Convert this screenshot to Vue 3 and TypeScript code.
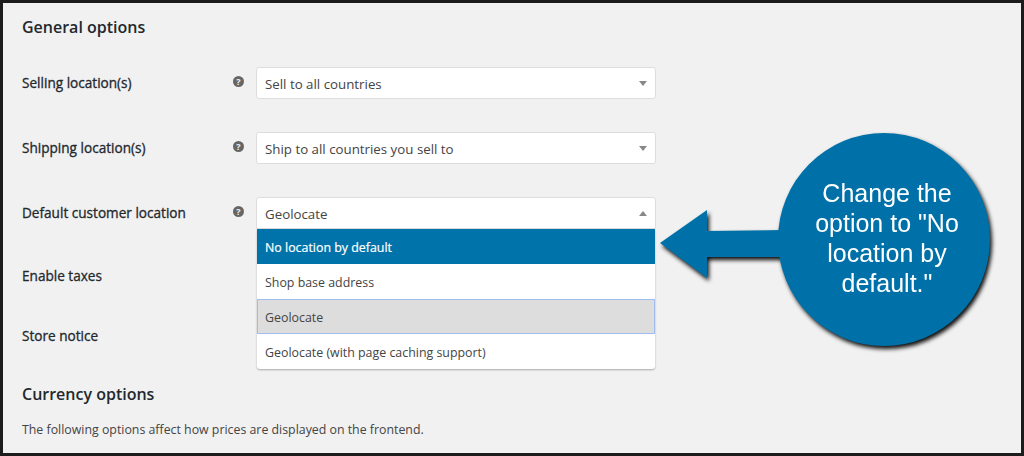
<script setup lang="ts">
interface Row {
  label: string;
  value: string;
}

const selectRows: Row[] = [
  { label: 'Selling location(s)', value: 'Sell to all countries' },
  { label: 'Shipping location(s)', value: 'Ship to all countries you sell to' },
];

const options = [
  { text: 'No location by default', state: 'active' },
  { text: 'Shop base address', state: '' },
  { text: 'Geolocate', state: 'current' },
  { text: 'Geolocate (with page caching support)', state: '' },
];
</script>

<template>
  <div class="page">
    <h2 class="heading first">General options</h2>

    <div v-for="row in selectRows" :key="row.label" class="row">
      <span class="label">{{ row.label }}</span>
      <span class="help">?</span>
      <div class="select">
        <span class="value">{{ row.value }}</span>
        <i class="caret down" />
      </div>
    </div>

    <div class="row">
      <span class="label">Default customer location</span>
      <span class="help">?</span>
      <div class="select open">
        <span class="value">Geolocate</span>
        <i class="caret up" />
        <ul class="dropdown">
          <li v-for="opt in options" :key="opt.text" :class="opt.state">{{ opt.text }}</li>
        </ul>
      </div>
    </div>

    <div class="plain taxes"><span class="label">Enable taxes</span></div>
    <div class="plain notice"><span class="label">Store notice</span></div>

    <h2 class="heading currency">Currency options</h2>
    <p class="desc">The following options affect how prices are displayed on the frontend.</p>

    <div class="callout">
      <svg class="arrow" width="130" height="80" viewBox="0 0 130 80">
        <path d="M2 35 L49 2 L49 23 L125 22 L125 49 L49 49 L49 70 Z" fill="#0071a8" />
      </svg>
      <div class="bubble">Change the<br />option to "No<br />location by<br />default."</div>
    </div>
  </div>
</template>

<style>
html,
body {
  margin: 0;
  background: #f1f1f1;
}
</style>

<style scoped>
.page {
  position: relative;
  box-sizing: border-box;
  width: 1024px;
  height: 456px;
  padding: 0 0 0 19px;
  overflow: hidden;
  background: #f1f1f1;
  border: 3px solid #1c1c1c;
  font-family: "Open Sans", "Noto Sans", sans-serif;
  color: #3c434a;
  font-size: 13.3px;
}
.heading {
  margin: 0;
  font-size: 16px;
  line-height: 20px;
  font-weight: 600;
  color: #23282d;
}
.first {
  padding-top: 14px;
  margin-bottom: 30px;
}
.row {
  display: grid;
  grid-template-columns: 210px 24px 400px;
  align-items: center;
  height: 32px;
  margin-bottom: 33px;
}
.label {
  color: #23282d;
  font-size: 13.6px;
  line-height: 20px;
  -webkit-text-stroke: 0.3px #23282d;
}
.help {
  width: 11px;
  height: 11px;
  margin-top: -3px;
  margin-left: 1px;
  border-radius: 50%;
  background: #666;
  color: #f1f1f1;
  font-size: 9px;
  line-height: 11px;
  font-weight: 700;
  text-align: center;
}
.select {
  position: relative;
  box-sizing: border-box;
  display: flex;
  align-items: center;
  justify-content: space-between;
  height: 32px;
  padding: 0 8px;
  background: #fff;
  border: 1px solid #ddd;
  border-radius: 3px;
  color: #444;
}
.select.open {
  border-bottom-left-radius: 0;
  border-bottom-right-radius: 0;
}
.value {
  padding-top: 1px;
}
.caret {
  width: 0;
  height: 0;
  border-left: 4px solid transparent;
  border-right: 4px solid transparent;
}
.caret.down {
  border-top: 5px solid #888;
}
.caret.up {
  border-bottom: 5px solid #888;
}
.dropdown {
  position: absolute;
  top: 31px;
  left: 0;
  right: 0;
  margin: 0;
  padding: 0;
  list-style: none;
  background: #fff;
  border-radius: 0 0 3px 3px;
  box-shadow: 0 1px 2px rgba(0, 0, 0, 0.3);
  font-size: 12.4px;
}
.dropdown li {
  box-sizing: border-box;
  height: 35px;
  padding: 0 8px;
  line-height: 37px;
  color: #444;
}
.dropdown li.active {
  background: #0073aa;
  color: #fff;
  -webkit-text-stroke: 0.2px #fff;
}
.dropdown li.current {
  background: #ddd;
  border: 1px solid #a0bcf0;
  padding: 0 7px;
  line-height: 35px;
}
.plain {
  height: 20px;
  line-height: 20px;
}
.taxes {
  padding-top: 4px;
}
.notice {
  margin-top: 40px;
}
.currency {
  margin-top: 38px;
}
.desc {
  margin: 16px 0 0;
  font-size: 12.35px;
  line-height: 20px;
  color: #444;
}
.callout {
  position: absolute;
  left: 655px;
  top: 127px;
  width: 340px;
  height: 220px;
  filter: drop-shadow(2px 3px 2px rgba(0, 0, 0, 0.95));
}
.arrow {
  position: absolute;
  left: 0;
  top: 78px;
}
.bubble {
  position: absolute;
  left: 120px;
  top: 3px;
  box-sizing: border-box;
  width: 212px;
  height: 213px;
  padding: 45px 0 0 6px;
  border-radius: 50%;
  background: #0071a8;
  color: #fff;
  font-family: "Liberation Sans", Arial, sans-serif;
  font-size: 25px;
  line-height: 30px;
  text-align: center;
}
</style>
